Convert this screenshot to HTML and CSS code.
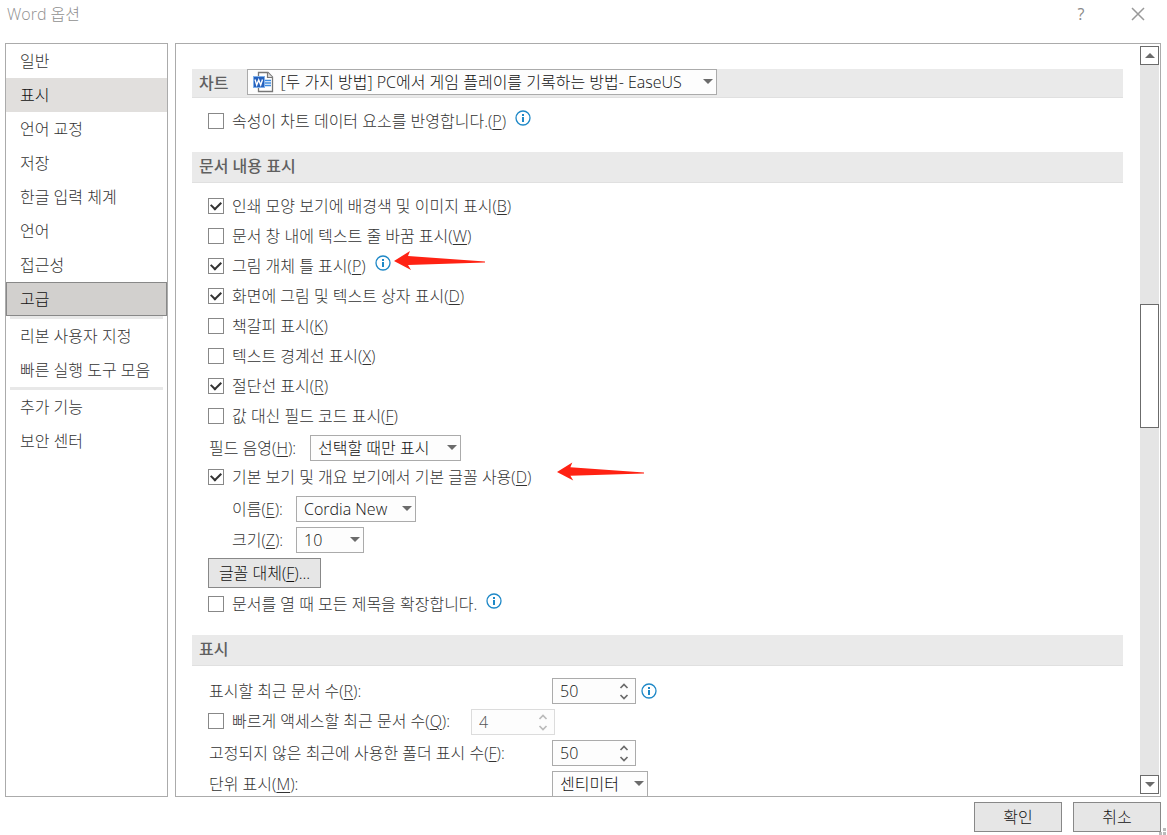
FILE: index.html
```html
<!DOCTYPE html>
<html lang="ko">
<head>
<meta charset="utf-8">
<meta name="viewport" content="width=device-width, initial-scale=1">
<title>Word 옵션</title>
<link rel="stylesheet" href="styles.css">
</head>
<body>
<svg class="defs" aria-hidden="true">
  <symbol id="info" viewBox="0 0 16 16"><circle cx="8" cy="8" r="7" fill="none" stroke="#1e88c7" stroke-width="1.3"/><path d="M7 4h2v2H7zM7 7h2v5H7z" fill="#1e88c7"/></symbol>
  <symbol id="arrow" viewBox="0 0 92 20"><path d="M0 10L16 0L14 5L91 10.5V11.5L14 14L17 19Z" fill="#ff2213"/></symbol>
  <symbol id="up" viewBox="0 0 10 6"><path d="M1.5 5L5 1.5L8.500 5" fill="none" stroke="currentColor" stroke-width="1.7"/></symbol>
  <symbol id="down" viewBox="0 0 10 6"><path d="M1.5 1L5 4.500L8.500 1" fill="none" stroke="currentColor" stroke-width="1.7"/></symbol>
</svg>
<div class="dialog">
  <header class="titlebar">
    <h1 class="title">Word 옵션</h1>
    <button class="title-btn help" type="button" aria-label="도움말">?</button>
    <button class="title-btn" type="button" aria-label="닫기"><svg width="14" height="14" viewBox="0 0 14 14"><path d="M1 1L13 13M13 1L1 13" stroke="#999" stroke-width="1.5"/></svg></button>
  </header>
  <div class="body">
    <nav class="sidebar">
      <button class="nav-item" type="button">일반</button>
      <button class="nav-item hover" type="button">표시</button>
      <button class="nav-item" type="button">언어 교정</button>
      <button class="nav-item" type="button">저장</button>
      <button class="nav-item" type="button">한글 입력 체계</button>
      <button class="nav-item" type="button">언어</button>
      <button class="nav-item" type="button">접근성</button>
      <button class="nav-item selected" type="button" aria-current="page">고급</button>
      <hr class="nav-sep">
      <button class="nav-item" type="button">리본 사용자 지정</button>
      <button class="nav-item" type="button">빠른 실행 도구 모음</button>
      <hr class="nav-sep">
      <button class="nav-item" type="button">추가 기능</button>
      <button class="nav-item" type="button">보안 센터</button>
    </nav>
    <main class="panel">
      <div class="content">
        <section class="section">
          <div class="section-head chart-head">
            <label for="chart-doc">차트</label>
            <span class="combo doc">
              <svg class="doc-icon" width="22" height="22" viewBox="0 0 22 22" aria-hidden="true">
                <path d="M6.500 1.500H16L20.500 6V20.500H6.500Z" fill="#fff" stroke="#777" stroke-width="1.3"/>
                <path d="M15.500 1.500V6.500H20.500" fill="#ddd" stroke="#777" stroke-width="1.2"/>
                <path d="M13 9.500H19M13 12H19M13 14.500H19" stroke="#3d8be0" stroke-width="1.3"/>
                <rect x="1.500" y="5.500" width="11" height="11" fill="#2561bd" stroke="#7fb0ea"/>
                <path d="M3 8.500L4.700 14L6.700 9L8.700 14L10.500 8.500" fill="none" stroke="#fff" stroke-width="1.4"/>
              </svg>
              <select id="chart-doc"><option>[두 가지 방법] PC에서 게임 플레이를 기록하는 방법- EaseUS</option></select>
            </span>
          </div>
          <div class="rows">
            <div class="row"><label class="check"><input type="checkbox"><span>속성이 차트 데이터 요소를 반영합니다.(<u>P</u>)</span></label><svg class="info"><use href="#info"/></svg></div>
          </div>
        </section>
        <section class="section">
          <h2 class="section-head">문서 내용 표시</h2>
          <div class="rows">
            <div class="row"><label class="check"><input type="checkbox" checked><span>인쇄 모양 보기에 배경색 및 이미지 표시(<u>B</u>)</span></label></div>
            <div class="row"><label class="check"><input type="checkbox"><span>문서 창 내에 텍스트 줄 바꿈 표시(<u>W</u>)</span></label></div>
            <div class="row"><label class="check"><input type="checkbox" checked><span>그림 개체 틀 표시(<u>P</u>)</span></label><svg class="info"><use href="#info"/></svg><svg class="arrow"><use href="#arrow"/></svg></div>
            <div class="row"><label class="check"><input type="checkbox" checked><span>화면에 그림 및 텍스트 상자 표시(<u>D</u>)</span></label></div>
            <div class="row"><label class="check"><input type="checkbox"><span>책갈피 표시(<u>K</u>)</span></label></div>
            <div class="row"><label class="check"><input type="checkbox"><span>텍스트 경계선 표시(<u>X</u>)</span></label></div>
            <div class="row"><label class="check"><input type="checkbox" checked><span>절단선 표시(<u>R</u>)</span></label></div>
            <div class="row"><label class="check"><input type="checkbox"><span>값 대신 필드 코드 표시(<u>F</u>)</span></label></div>
            <div class="row field"><label class="caption shade" for="shading">필드 음영(<u>H</u>):</label><span class="combo shading"><select id="shading"><option>선택할 때만 표시</option></select></span></div>
            <div class="row"><label class="check"><input type="checkbox" checked><span>기본 보기 및 개요 보기에서 기본 글꼴 사용(<u>D</u>)</span></label><svg class="arrow second"><use href="#arrow"/></svg></div>
            <div class="row field indent"><label class="caption short" for="font-name">이름(<u>E</u>):</label><span class="combo font-name"><select id="font-name"><option>Cordia New</option></select></span></div>
            <div class="row field indent"><label class="caption short" for="font-size">크기(<u>Z</u>):</label><span class="combo font-size"><select id="font-size"><option>10</option></select></span></div>
            <div class="row field"><button class="btn substitute" type="button">글꼴 대체(<u>F</u>)...</button></div>
            <div class="row"><label class="check"><input type="checkbox"><span>문서를 열 때 모든 제목을 확장합니다.</span></label><svg class="info"><use href="#info"/></svg></div>
          </div>
        </section>
        <section class="section">
          <h2 class="section-head">표시</h2>
          <div class="rows">
            <div class="row field"><label class="caption wide" for="recent-docs">표시할 최근 문서 수(<u>R</u>):</label><span class="spin"><input id="recent-docs" type="number" value="50"><span class="steps"><button type="button" aria-label="늘리기"><svg><use href="#up"/></svg></button><button type="button" aria-label="줄이기"><svg><use href="#down"/></svg></button></span></span><svg class="info middle"><use href="#info"/></svg></div>
            <div class="row field"><label class="check quick"><input type="checkbox"><span>빠르게 액세스할 최근 문서 수(<u>Q</u>):</span></label><span class="spin disabled"><input type="number" value="4" disabled aria-label="빠르게 액세스할 최근 문서 수"><span class="steps"><button type="button" disabled aria-label="늘리기"><svg><use href="#up"/></svg></button><button type="button" disabled aria-label="줄이기"><svg><use href="#down"/></svg></button></span></span></div>
            <div class="row field"><label class="caption wide" for="folders">고정되지 않은 최근에 사용한 폴더 표시 수(<u>F</u>):</label><span class="spin"><input id="folders" type="number" value="50"><span class="steps"><button type="button" aria-label="늘리기"><svg><use href="#up"/></svg></button><button type="button" aria-label="줄이기"><svg><use href="#down"/></svg></button></span></span></div>
            <div class="row field"><label class="caption wide" for="unit">단위 표시(<u>M</u>):</label><span class="combo unit"><select id="unit"><option>센티미터</option></select></span></div>
          </div>
        </section>
      </div>
      <div class="scrollbar">
        <button class="scroll-btn" type="button" aria-label="위로"><svg width="10" height="5" viewBox="0 0 10 5"><path d="M0 5L5 0L10 5Z" fill="#6b6b6b"/></svg></button>
        <div class="track"><div class="thumb"></div></div>
        <button class="scroll-btn" type="button" aria-label="아래로"><svg width="10" height="5" viewBox="0 0 10 5"><path d="M0 0L5 5L10 0Z" fill="#6b6b6b"/></svg></button>
      </div>
    </main>
  </div>
  <footer class="footer">
    <button class="btn" type="button">확인</button>
    <button class="btn" type="button">취소</button>
  </footer>
  <svg class="grip" width="8" height="7" viewBox="0 0 8 7" aria-hidden="true"><path d="M4 0h3v3H4zM0 4h3v3H0zM4 4h3v3H4z" fill="#bbb"/></svg>
</div>
</body>
</html>
```
FILE: styles.css
```css
* { box-sizing: border-box; }

body {
  margin: 0;
  background: #fff;
  color: #333;
  font: 300 16px/24px "Open Sans", "Noto Sans CJK KR", sans-serif;
}

button, input, select { font: inherit; color: inherit; margin: 0; }
button { padding: 0; border: 0; background: none; border-radius: 0; }
u { text-decoration-thickness: 1px; text-underline-offset: 2px; }

.defs { position: absolute; width: 0; height: 0; }

.dialog {
  position: relative;
  display: flex;
  flex-direction: column;
  height: 100vh;
  overflow: hidden;
}

/* Title bar */
.titlebar {
  display: flex;
  align-items: flex-start;
  height: 43px;
  padding: 2px 14px 0 7px;
}
.title {
  flex: 1;
  margin: 0;
  color: #909090;
  font-size: 16px;
  font-weight: 300;
  line-height: 24px;
}
.title-btn {
  display: flex;
  align-items: center;
  justify-content: center;
  width: 30px;
  height: 24px;
  color: #888;
}
.title-btn.help { margin-right: 27px; font-weight: 400; }

.body {
  flex: 1;
  display: flex;
  gap: 7px;
  min-height: 0;
  padding: 0 6px 0 5px;
}

/* Category list */
.sidebar {
  flex: none;
  display: flex;
  flex-direction: column;
  width: 163px;
  border: 1px solid #ababab;
}
.nav-item {
  flex: none;
  height: 34px;
  padding: 0 14px;
  text-align: left;
  white-space: nowrap;
}
.nav-item.hover { background: #e1dfdd; color: #111; }
.nav-item.selected {
  padding: 0 13px;
  border: 1px solid #888;
  background: #d2d0ce;
  color: #111;
}
.nav-sep {
  flex: none;
  height: 3px;
  margin: 0 4px;
  border: 0;
  background: #e8e8e8;
}

/* Settings panel */
.panel {
  flex: 1;
  display: flex;
  min-width: 0;
  border: 1px solid #ababab;
}
.content {
  flex: 1;
  min-width: 0;
  padding: 25px 17px 0 16px;
  overflow: hidden;
}
.section { margin-bottom: 16px; }
.section-head {
  display: flex;
  align-items: center;
  height: 31px;
  margin: 0;
  padding: 0 7px 2px;
  border-bottom: 1px solid #e0e0e0;
  background: #eaeaea;
  color: #606060;
  font-size: 16px;
  font-weight: 500;
}
.chart-head { gap: 19px; height: 29px; padding-bottom: 0; }

.rows { padding: 8px 0 0 16px; }
.row {
  display: flex;
  align-items: center;
  height: 30px;
  white-space: nowrap;
}
.row.field { height: auto; padding: 4px 0 1px; }
.row.indent { padding-left: 24px; }

.check { display: flex; align-items: center; gap: 8px; }
.check input {
  appearance: none;
  display: grid;
  place-items: center;
  width: 16px;
  height: 16px;
  border: 1px solid #888;
  background: #fff;
}
.check input:checked::before {
  content: "";
  width: 8px;
  height: 5px;
  margin-bottom: 3px;
  border: solid #333;
  border-width: 0 0 2px 2px;
  transform: rotate(-45deg);
}
.check.quick { align-self: flex-start; margin-right: 21px; }

.caption { padding-left: 1px; }
.caption.shade { width: 102px; }
.caption.short { width: 64px; padding-left: 0; }
.caption.wide { width: 344px; }

.info {
  flex: none;
  align-self: flex-start;
  width: 16px;
  height: 16px;
  margin: 4px 0 0 9px;
}
.info.middle { align-self: center; margin: 0 0 0 5px; }
.arrow {
  align-self: flex-start;
  width: 92px;
  height: 20px;
  margin-left: 3px;
}
.arrow.second { width: 88px; margin-left: 26px; }

/* Drop-down lists */
.combo { position: relative; display: flex; color: #111; }
.combo::after {
  content: "";
  position: absolute;
  top: 10px;
  right: 4px;
  border: solid transparent;
  border-width: 5px 5px 0;
  border-top-color: #6b6b6b;
  pointer-events: none;
}
.combo select {
  appearance: none;
  width: 100%;
  height: 26px;
  padding: 0 18px 0 7px;
  border: 1px solid #ababab;
  border-radius: 0;
  background: #fdfdfd;
  line-height: 24px;
}
.combo.doc { width: 470px; align-self: flex-start; font-weight: 300; }
.combo.doc select { padding-left: 32px; }
.doc-icon { position: absolute; top: 2px; left: 5px; }
.combo.shading { width: 151px; }
.combo.font-name { width: 120px; }
.combo.font-size { width: 68px; }
.combo.unit { width: 96px; }

/* Number boxes */
.spin {
  display: flex;
  width: 84px;
  height: 26px;
  border: 1px solid #ababab;
  background: #fdfdfd;
  color: #111;
}
.spin input {
  appearance: textfield;
  flex: 1;
  min-width: 0;
  padding: 0 0 0 7px;
  border: 0;
  background: none;
}
.spin input::-webkit-inner-spin-button { appearance: none; }
.steps {
  display: flex;
  flex-direction: column;
  justify-content: space-between;
  width: 22px;
  padding: 4px 6px 3px 6px;
  color: #6b6b6b;
}
.steps button { display: flex; color: inherit; }
.steps svg { width: 10px; height: 6px; }
.spin.disabled { border-color: #dcdcdc; color: #555; }
.spin.disabled .steps { color: #bbb; }

/* Push buttons */
.btn {
  width: 88px;
  height: 30px;
  border: 1px solid #888;
  background: #e6e6e6;
  color: #111;
}
.btn.substitute { width: 113px; }

/* Scroll bar */
.scrollbar {
  flex: none;
  display: flex;
  flex-direction: column;
  width: 19px;
  margin: 2px 1px 2px 0;
}
.scroll-btn {
  display: flex;
  align-items: center;
  justify-content: center;
  height: 19px;
  border: 1px solid #6b6b6b;
  background: #fff;
}
.track {
  flex: 1;
  display: grid;
  grid-template-rows: 239fr 124fr 347fr;
  background: #e5e5e5;
}
.thumb { grid-row: 2; border: 1px solid #6b6b6b; background: #fff; }

.footer {
  display: flex;
  justify-content: flex-end;
  gap: 11px;
  padding: 5px 6px 3px;
}
.grip { position: absolute; right: 0; bottom: 0; }
```
